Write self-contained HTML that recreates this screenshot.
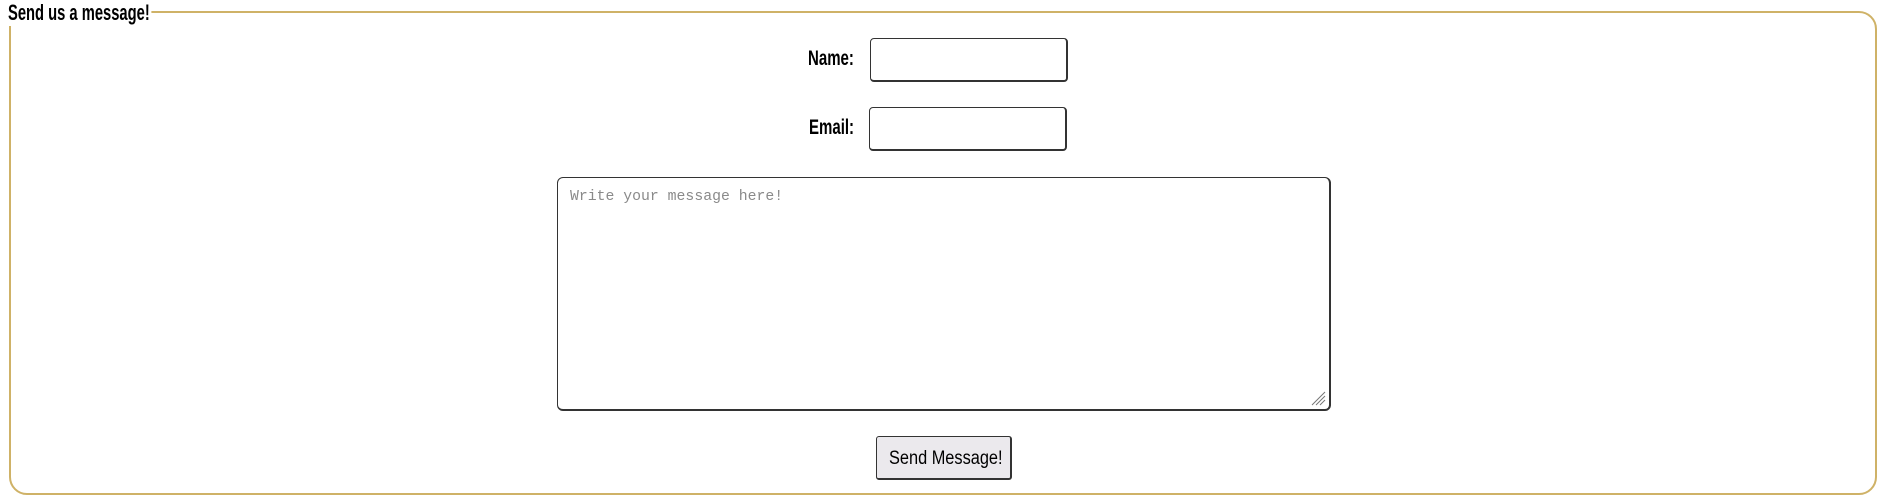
<!DOCTYPE html>
<html><head><meta charset="utf-8"><style>
html,body{margin:0;padding:0;background:#fff;width:1890px;height:503px;overflow:hidden;position:relative;font-family:"Liberation Sans",sans-serif;}
.fs{position:absolute;left:9px;top:11px;width:1868px;height:484px;border:2px solid #cfb267;border-radius:0 18px 18px 18px;box-sizing:border-box;}
.lg{position:absolute;left:8px;top:0px;background:#fff;padding:0 2px 0 0;font-size:22px;line-height:26px;font-weight:bold;color:#000;transform:scaleX(0.67);transform-origin:left top;white-space:nowrap;}
.lbl{position:absolute;font-size:21px;font-weight:bold;color:#000;transform:scaleX(0.715);transform-origin:left top;white-space:nowrap;}
.box{position:absolute;border:1.5px solid #333;border-bottom-width:2.5px;border-right-width:2px;border-radius:4px;box-sizing:border-box;background:#fff;}
.ph{position:absolute;left:570px;top:189px;font-family:"Liberation Mono",monospace;font-size:14.8px;color:#8a8a8a;}
.btn{position:absolute;left:876px;top:436px;width:136px;height:44px;background:#ebe9ed;border:2px solid #333;border-top-width:1.5px;border-left-width:1.5px;border-radius:3px;box-sizing:border-box;}
.bt{position:absolute;left:889px;top:448px;font-size:19px;color:#000;transform:scaleX(0.86);transform-origin:left top;white-space:nowrap;}
</style></head><body>
<div class="fs"></div>
<div class="lg">Send us a message!</div>
<div class="lbl" style="left:808px;top:47px;">Name:</div>
<div class="box" style="left:870px;top:38px;width:198px;height:44px;"></div>
<div class="lbl" style="left:809px;top:116px;">Email:</div>
<div class="box" style="left:869px;top:107px;width:198px;height:44px;"></div>
<div class="box" style="left:557px;top:177px;width:774px;height:234px;border-radius:6px;"></div>
<div class="ph">Write your message here!</div>
<svg style="position:absolute;left:1310px;top:390px" width="16" height="16"><path d="M15 2 L2 15 M15 6 L6 15 M15 10 L10 15" stroke="#777" stroke-width="1"/></svg>
<div class="btn"></div>
<div class="bt">Send Message!</div>
</body></html>
